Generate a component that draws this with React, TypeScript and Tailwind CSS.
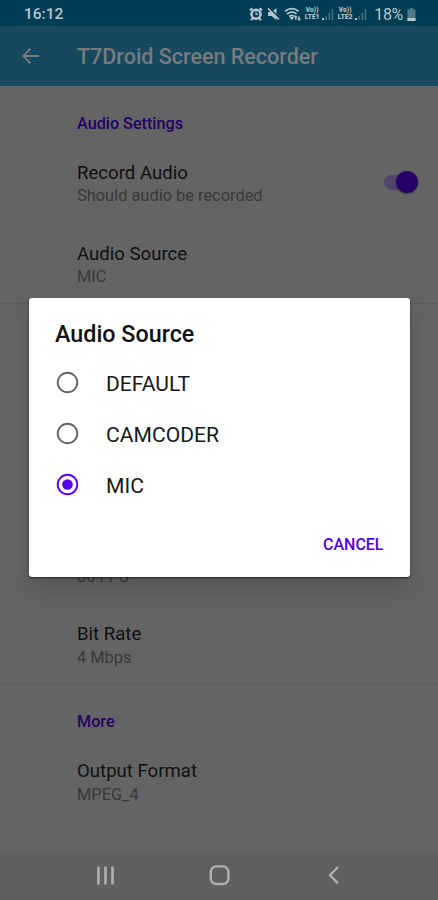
import type { ReactNode } from "react";

export default function App() {
  return (
    <div className="relative flex h-[900px] w-[438px] flex-col overflow-hidden bg-[#646464] font-[Roboto,sans-serif]">
      <StatusBar />
      <header className="flex h-[60px] shrink-0 items-center bg-[#16485e] pl-[21px] text-[#777b7d]">
        <svg className="h-5 w-5" viewBox="0 0 20 20" fill="none" stroke="currentColor" strokeWidth="1.9">
          <path d="M18 10H2.5M9.5 2.7 2.2 10l7.3 7.3" />
        </svg>
        <h1 className="ml-9 pt-[2px] text-[21.5px] font-medium leading-[30px]">T7Droid Screen Recorder</h1>
      </header>

      <main className="flex h-[766px] shrink-0 flex-col">
        <SectionTitle>Audio Settings</SectionTitle>
        <Preference title="Record Audio" summary="Should audio be recorded">
          <Toggle />
        </Preference>
        <Preference title="Audio Source" summary="MIC" />
        <div className="h-px shrink-0 bg-[#5a5a5a]" />
        <div className="h-[217.5px] shrink-0" />
        <Preference summary="30 FPS" />
        <Preference title="Bit Rate" summary="4 Mbps" />
        <div className="h-px shrink-0 bg-[#5a5a5a]" />
        <SectionTitle>More</SectionTitle>
        <Preference title="Output Format" summary="MPEG_4" />
      </main>

      <NavigationBar />
      <AudioSourceDialog />
    </div>
  );
}

function SectionTitle({ children }: { children: ReactNode }) {
  return (
    <h2 className="h-[55px] shrink-0 pl-[77px] pt-[27.5px] text-[16.2px] font-medium leading-5 text-[#250066]">{children}</h2>
  );
}

function Preference({ title, summary, children }: { title?: string; summary: string; children?: ReactNode }) {
  return (
    <div className="flex h-[81px] shrink-0 items-start justify-between pl-[77px] pr-[20px]">
      <div className="pt-[19.5px]">
        <p className="h-[23.5px] text-[18.6px] leading-6 text-[#101010]">{title}</p>
        <p className="text-[16.4px] leading-6 text-[#383838]">{summary}</p>
      </div>
      {children}
    </div>
  );
}

function Toggle() {
  return (
    <div className="mt-[30px] flex h-[22px] w-[34px] items-center">
      <span className="h-[15px] w-6 rounded-full bg-[#50466a]" />
      <span className="-ml-3 h-[22px] w-[22px] shrink-0 rounded-full bg-[#260067] shadow-[0_1px_2px_rgba(0,0,0,0.35)]" />
    </div>
  );
}

function StatusBar() {
  return (
    <div className="flex h-[26px] shrink-0 items-center bg-[#003c54] pl-6 pr-[22px] pt-[2px] text-[#b5c6ce]">
      <span className="text-[15.5px] font-medium leading-5">16:12</span>
      <div className="ml-auto flex items-center">
        <svg className="h-[14px] w-[14px]" viewBox="0 0 14 14" fill="none" stroke="currentColor">
          <circle cx="7" cy="7.2" r="4.5" strokeWidth="2.6" />
          <path d="M1 3.2 3.4 1.2M13 3.2 10.6 1.2M2 13l2-2M12 13l-2-2" strokeWidth="2" />
          <path d="M7 4.6v2.8h2" strokeWidth="1.2" />
        </svg>
        <svg className="ml-1 h-[14px] w-[13px]" viewBox="0 0 13 14">
          <path d="M1 5h3.5L9.5 1v12l-5-4H1z" fill="currentColor" />
          <path d="m2.5 1 10 10" stroke="#003c54" strokeWidth="1.5" />
          <path d="m1 1.5 11 11" stroke="currentColor" strokeWidth="1.6" />
        </svg>
        <svg className="ml-1 h-[15px] w-[17px]" viewBox="0 0 17 15" fill="none" stroke="currentColor">
          <path d="M1 4.4c4-3.6 9.5-3.6 13.5 0M3 7c3-2.7 6.8-2.7 9.6 0M5.2 9.5c1.6-1.4 3.5-1.4 5 0" strokeWidth="1.7" />
          <path d="m6.2 10.5 1.6 2 1.5-2z" fill="currentColor" />
          <path d="M11.8 9v4M10.5 10.5 11.8 9l1.2 1.5M15 9v4M13.8 11.5 15 13l1.3-1.5" strokeWidth="1.2" />
        </svg>
        <Signal label="LTE1" />
        <Signal label="LTE2" />
        <span className="ml-[7px] pt-px text-base leading-5 tracking-[-0.3px]">18%</span>
        <svg className="ml-1 h-[13px] w-[9px]" viewBox="0 0 9 13">
          <path d="M3 0h3v1.5h2.5V13H.5V1.5H3z" fill="#547885" />
          <path d="M.5 10h8v3h-8z" fill="#b5c6ce" />
        </svg>
      </div>
    </div>
  );
}

function Signal({ label }: { label: string }) {
  return (
    <div className="ml-[2px] flex items-center">
      <div className="flex w-[18px] flex-col items-center text-[6.4px] font-black leading-[7.5px] tracking-[0.2px]">
        <span>Vo))</span>
        <span>{label}</span>
      </div>
      <svg className="h-3 w-[13px]" viewBox="0 0 13 12">
        <path d="M1 10h2v2H1z" fill="currentColor" />
        <path d="M4.2 8h1.7v4H4.2zM7.4 5h1.7v7H7.4zM10.6 1h1.7v11h-1.7z" fill="#426b7b" />
      </svg>
    </div>
  );
}

function AudioSourceDialog() {
  return (
    <div
      role="dialog"
      className="absolute left-[28.5px] top-[297.5px] flex h-[279.5px] w-[381.5px] flex-col rounded-[3px] bg-white px-[26.5px] shadow-[0_12px_24px_rgba(0,0,0,0.15),0_1px_2px_rgba(0,0,0,0.6)]"
    >
      <h2 className="pt-[21.5px] text-[23.3px] font-medium leading-[30px] text-[#111]">Audio Source</h2>
      <div className="mt-2">
        <RadioOption label="DEFAULT" />
        <RadioOption label="CAMCODER" />
        <RadioOption label="MIC" selected />
      </div>
      <button className="mt-[25px] self-end text-base font-medium leading-5 text-[#5300df]">CANCEL</button>
    </div>
  );
}

function RadioOption({ label, selected }: { label: string; selected?: boolean }) {
  return (
    <div className="flex h-[51px] items-center">
      <svg
        className={selected ? "ml-px h-[23px] w-[23px] text-[#5a00ee]" : "ml-px h-[23px] w-[23px] text-[#666]"}
        viewBox="0 0 23 23"
      >
        <circle cx="11.5" cy="11.5" r="9.8" fill="none" stroke="currentColor" strokeWidth="1.9" />
        {selected && <circle cx="11.5" cy="11.5" r="5.3" fill="currentColor" />}
      </svg>
      <span className="ml-[27px] pt-[2px] text-[21.1px] leading-6 text-[#181818]">{label}</span>
    </div>
  );
}

function NavigationBar() {
  return (
    <nav className="flex h-12 shrink-0 items-center justify-between bg-[#606060] pl-[95px] pr-[93px] text-[#b0b0b0]">
      <svg className="h-[22px] w-[22px]" viewBox="0 0 22 22" stroke="currentColor" strokeWidth="2.6">
        <path d="M3.5 1.5v18M10.5 1.5v18M17.5 1.5v18" />
      </svg>
      <svg className="h-[22px] w-[22px]" viewBox="0 0 22 22" fill="none" stroke="currentColor" strokeWidth="2.4">
        <rect x="1.8" y="1.4" width="17.6" height="17.6" rx="5.5" />
      </svg>
      <svg className="h-[22px] w-[22px]" viewBox="0 0 22 22" fill="none" stroke="currentColor" strokeWidth="2.3">
        <path d="M15 2 7 10.200l8 8.200" />
      </svg>
    </nav>
  );
}
